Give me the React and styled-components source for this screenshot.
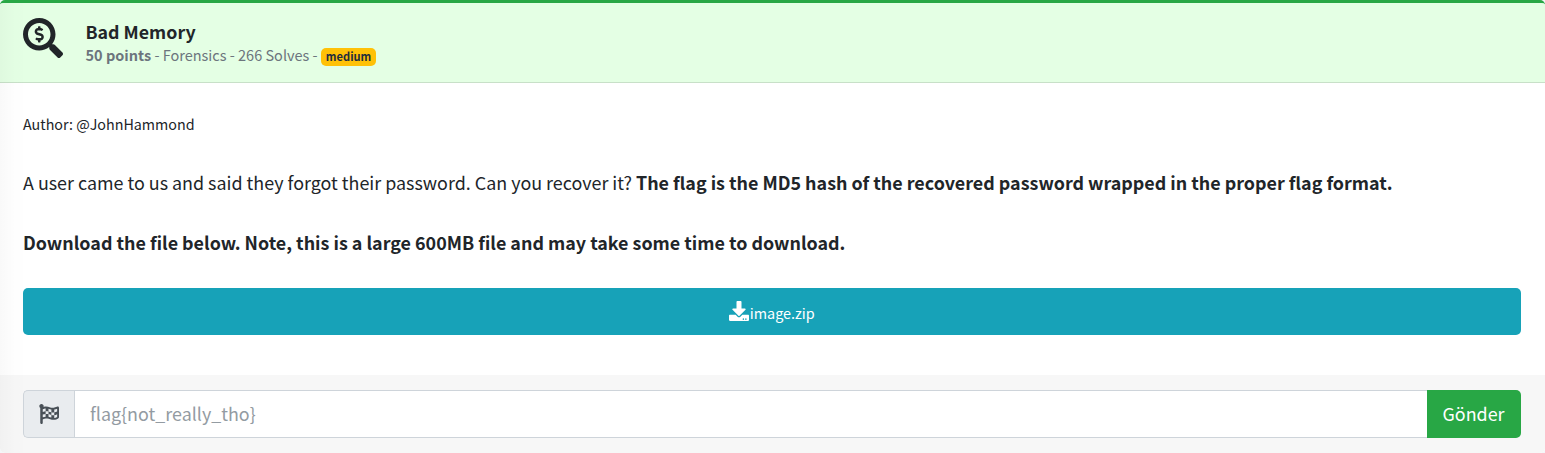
import React from "react";
import styled, { createGlobalStyle } from "styled-components";
import { FaSearchDollar, FaDownload, FaFlagCheckered } from "react-icons/fa";

const GlobalStyle = createGlobalStyle`
  * { box-sizing: border-box; }
  body {
    margin: 0;
    background: #f4f6f9;
    color: #212529;
    font-family: "Source Sans Pro", "Noto Sans CJK SC", sans-serif;
    font-size: 17.9px;
    line-height: 30px;
  }
  b { font-weight: 700; }
`;

const Card = styled.article`
  position: relative;
  display: flex;
  flex-direction: column;
  height: 453px;
  background: #fff;
  border-top: 3px solid #28a745;
  border-radius: 5px;
  overflow: hidden;
`;

const EdgeShade = styled.div`
  position: absolute;
  inset: 0 auto 0 0;
  width: 23px;
  background: linear-gradient(to right, rgba(0, 0, 0, 0.025), rgba(0, 0, 0, 0.004) 70%);
  pointer-events: none;
`;

const Header = styled.header`
  display: flex;
  gap: 22.5px;
  height: 80px;
  padding: 15px 23px 0;
  background: #e4ffe4;
  border-bottom: 1px solid #c8e0c8;
`;

const Heading = styled.div`
  display: flex;
  flex-direction: column;
  padding-top: 1px;
`;

const Title = styled.h3`
  margin: 0;
  font-size: 17.8px;
  font-weight: 700;
  line-height: 25px;
`;

const Meta = styled.div`
  display: flex;
  align-items: center;
  color: #6c757d;
  font-size: 14.5px;
  font-weight: 400;
  line-height: 22px;
  white-space: pre;
`;

const Badge = styled.span`
  height: 18px;
  margin-top: 3px;
  padding: 0 5px;
  border-radius: 5px;
  background: #ffc107;
  color: #1f2d3d;
  font-size: 11.1px;
  font-weight: 700;
  line-height: 17px;
`;

const Body = styled.section`
  flex: 1;
  padding: 26px 24px 0 23px;
`;

const Author = styled.div`
  font-size: 14.3px;
`;

const Paragraph = styled.p`
  margin: 28px 0 30px;
  white-space: nowrap;

  & + & { margin: 0 0 31px; }
`;

const DownloadButton = styled.button`
  display: flex;
  align-items: center;
  justify-content: center;
  gap: 0.5px;
  width: 100%;
  height: 47px;
  padding: 2px 0 0;
  border: 0;
  border-radius: 5px;
  background: #17a2b8;
  color: #fff;
  font: inherit;
  font-size: 14.4px;

  svg { margin-bottom: 3px; }
`;

const Footer = styled.footer`
  display: flex;
  height: 78px;
  padding: 15px 24px 15px 23px;
  background: #f7f7f7;
`;

const FlagAddon = styled.span`
  display: flex;
  align-items: center;
  justify-content: center;
  width: 51px;
  border: 1px solid #ced4da;
  border-right: 0;
  border-radius: 5px 0 0 5px;
  background: #e9ecef;
  color: #495057;
`;

const FlagInput = styled.input`
  flex: 1;
  min-width: 0;
  padding: 0 15px 2px;
  border: 1px solid #ced4da;
  border-right: 0;
  outline: 0;
  background: #fff;
  font: inherit;

  &::placeholder { color: #939ba2; opacity: 1; }
`;

const SubmitButton = styled.button`
  width: 94px;
  padding: 0 1px 2px 0;
  border: 0;
  border-radius: 0 5px 5px 0;
  background: #28a745;
  color: #fff;
  font: inherit;
`;

export default function App() {
  return (
    <>
      <GlobalStyle />
      <Card>
        <Header>
          <FaSearchDollar size={40} />
          <Heading>
            <Title>Bad Memory</Title>
            <Meta>
              <b>50 points</b>
              <span> - Forensics - 266 Solves - </span>
              <Badge>medium</Badge>
            </Meta>
          </Heading>
        </Header>
        <Body>
          <Author>Author: @JohnHammond</Author>
          <Paragraph>
            A user came to us and said they forgot their password. Can you recover it?{" "}
            <b>The flag is the MD5 hash of the recovered password wrapped in the proper flag format.</b>
          </Paragraph>
          <Paragraph>
            <b>Download the file below. Note, this is a large 600MB file and may take some time to download.</b>
          </Paragraph>
          <DownloadButton>
            <FaDownload size={20} />
            image.zip
          </DownloadButton>
        </Body>
        <Footer>
          <FlagAddon><FaFlagCheckered size={20} /></FlagAddon>
          <FlagInput placeholder="flag{not_really_tho}" />
          <SubmitButton>Gönder</SubmitButton>
        </Footer>
        <EdgeShade />
      </Card>
    </>
  );
}
